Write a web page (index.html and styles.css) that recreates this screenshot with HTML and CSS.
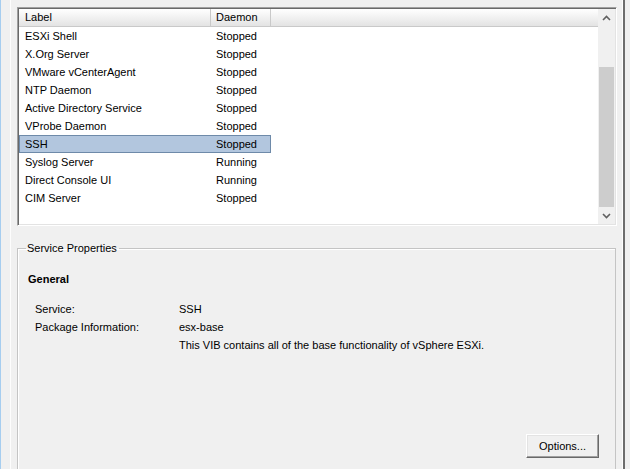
FILE: index.html
```html
<!DOCTYPE html>
<html>
<head>
<meta charset="utf-8">
<link rel="stylesheet" href="styles.css">
</head>
<body>
<div class="frame">
  <div class="blue"></div>
  <div class="panel">
    <div class="listbox">
      <div class="table">
        <div class="header">
          <div class="hcell c1">Label</div>
          <div class="hcell c2">Daemon</div>
          <div class="hfill"></div>
        </div>
        <div class="row"><div class="cell c1">ESXi Shell</div><div class="cell c2">Stopped</div></div>
        <div class="row"><div class="cell c1">X.Org Server</div><div class="cell c2">Stopped</div></div>
        <div class="row"><div class="cell c1">VMware vCenterAgent</div><div class="cell c2">Stopped</div></div>
        <div class="row"><div class="cell c1">NTP Daemon</div><div class="cell c2">Stopped</div></div>
        <div class="row"><div class="cell c1">Active Directory Service</div><div class="cell c2">Stopped</div></div>
        <div class="row"><div class="cell c1">VProbe Daemon</div><div class="cell c2">Stopped</div></div>
        <div class="row selected"><div class="cell c1">SSH</div><div class="cell c2">Stopped</div></div>
        <div class="row"><div class="cell c1">Syslog Server</div><div class="cell c2">Running</div></div>
        <div class="row"><div class="cell c1">Direct Console UI</div><div class="cell c2">Running</div></div>
        <div class="row"><div class="cell c1">CIM Server</div><div class="cell c2">Stopped</div></div>
      </div>
      <div class="scrollbar">
        <div class="arrow">
          <svg width="9" height="6" viewBox="0 0 9 6"><polyline points="1,5 4.5,1.5 8,5" fill="none" stroke="#606060" stroke-width="1.6"/></svg>
        </div>
        <div class="track">
          <div class="thumb"></div>
        </div>
        <div class="arrow">
          <svg width="9" height="6" viewBox="0 0 9 6"><polyline points="1,1 4.5,4.5 8,1" fill="none" stroke="#606060" stroke-width="1.6"/></svg>
        </div>
      </div>
    </div>
    <fieldset class="group">
      <legend class="legend">Service Properties</legend>
      <div class="section">General</div>
      <div class="props">
        <div class="plabel">Service:</div>
        <div class="pvalue">SSH</div>
        <div class="plabel">Package Information:</div>
        <div class="pvalue">esx-base<br>This VIB contains all of the base functionality of vSphere ESXi.</div>
      </div>
      <div class="actions">
        <button class="btn">Options...</button>
      </div>
    </fieldset>
  </div>
</div>
</body>
</html>
```
FILE: styles.css
```css
* { box-sizing: border-box; }
html, body {
  margin: 0;
  padding: 0;
  width: 630px;
  height: 469px;
  overflow: hidden;
  background: #f0f0f0;
  font-family: "Liberation Sans", Arial, sans-serif;
  font-size: 11px;
  color: #000;
}
.frame {
  display: flex;
  height: 469px;
}
.blue {
  width: 1px;
  background: #a6cdef;
  margin-right: 9px;
}
.panel {
  width: 613px;
  border-left: 1px solid #fdfdfd;
  border-right: 1px solid #fdfdfd;
  box-shadow: 2px 0 0 #6d6d6d;
  padding: 7px 5px 0 6px;
  display: flex;
  flex-direction: column;
}
.listbox {
  flex: none;
  width: 600px;
  height: 219px;
  border-top: 1px solid #a0a0a0;
  border-left: 1px solid #a0a0a0;
  border-right: 1px solid #ffffff;
  border-bottom: 1px solid #ffffff;
  box-shadow: inset 1px 1px 0 #696969, inset -1px -1px 0 #e3e3e3;
  background: #fff;
  padding: 1px;
  display: flex;
}
.table {
  flex: 1;
  display: flex;
  flex-direction: column;
}
.header {
  display: flex;
  height: 18px;
  background: linear-gradient(#ffffff, #f4f4f4 40%, #e3e3e3);
  border-bottom: 1px solid #c9c9c9;
}
.hcell {
  line-height: 17px;
  border-right: 1px solid #c9c9c9;
}
.hfill { flex: 1; }
.c1 { width: 192px; padding-left: 6px; flex: none; }
.c2 { width: 60px; padding-left: 5px; flex: none; }
.row {
  display: flex;
  height: 18px;
  width: 252px;
  line-height: 18px;
}
.row.selected {
  background: #b2c6de;
  border: 1px solid #6e8aa9;
  line-height: 16px;
}
.row.selected .c1 { width: 191px; padding-left: 5px; }
.row.selected .c2 { width: 59px; }
.cell { white-space: nowrap; }
.scrollbar {
  width: 17px;
  background: #f0f0f0;
  display: flex;
  flex-direction: column;
}
.arrow {
  height: 17px;
  display: flex;
  align-items: center;
  justify-content: center;
}
.track {
  flex: 1;
  padding: 41px 1px 0 1px;
  display: flex;
  flex-direction: column;
}
.thumb {
  flex: 1;
  background: #cdcdcd;
}
.group {
  flex: none;
  margin: 15px 1px 0 0;
  padding: 15px 16px 0 10px;
  border: 1px solid #c4c4c4;
  box-shadow: inset 1px 1px 0 #fff;
  height: 240px;
}
.legend {
  padding: 0 2px 0 1px;
  margin-left: -2px;
  line-height: 14px;
}
.section {
  font-weight: bold;
  line-height: 18px;
  margin-bottom: 12px;
}
.props {
  display: grid;
  grid-template-columns: 144px 1fr;
  padding-left: 7px;
  line-height: 18px;
}
.actions {
  display: flex;
  justify-content: flex-end;
  margin-top: 80px;
}
.btn {
  width: 73px;
  height: 24px;
  font-family: "Liberation Sans", Arial, sans-serif;
  font-size: 11px;
  color: #000;
  background: #f0f0f0;
  border-top: 1px solid #ffffff;
  border-left: 1px solid #ffffff;
  border-right: 1px solid #696969;
  border-bottom: 1px solid #696969;
  box-shadow: inset -1px -1px 0 #a0a0a0, inset 1px 1px 0 #e3e3e3;
  padding: 0;
}
```
